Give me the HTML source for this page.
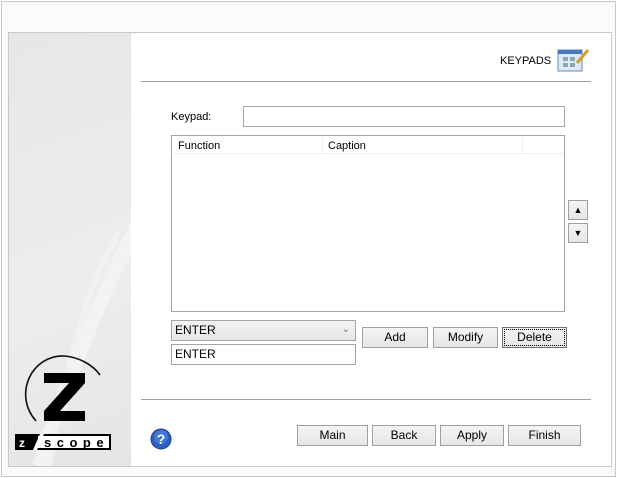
<!DOCTYPE html>
<html><head><style>
body{margin:0;width:618px;height:478px;background:#fff;font-family:"Liberation Sans",sans-serif;font-size:11px;color:#000;position:relative;overflow:hidden}
.a{position:absolute;box-sizing:border-box}
.btn{position:absolute;box-sizing:border-box;border:1px solid #a0a0a0;background:linear-gradient(#f4f4f4,#e6e6e6);text-align:center;line-height:18px;font-size:12px}
.in{position:absolute;box-sizing:border-box;border:1px solid #a5a5a5;background:#fff;font-size:12px;padding-left:3px;line-height:18px}
</style></head><body>
<div class="a" style="left:1px;top:1px;width:615px;height:476px;border:1px solid #c8c8c8;background:#fdfafd"></div>
<div class="a" style="left:8px;top:32px;width:604px;height:435px;border:1px solid #c8c8c8;background:#fff"></div>
<div class="a" style="left:9px;top:33px;width:122px;height:433px;background:linear-gradient(160deg,#e8e6e8,#eeecee 60%,#e6e4e6);overflow:hidden">
<svg width="122" height="433" style="position:absolute;left:0;top:0">
<path d="M 30 433 Q 80 280 140 170" stroke="#f4f2f4" stroke-width="14" fill="none"/>
<path d="M 110 200 Q 70 260 40 433" stroke="#f2f0f2" stroke-width="6" fill="none"/>
<path d="M 27 388 C 4 362, 22 322, 55 323 C 70 324, 84 332, 91 342" stroke="#111" stroke-width="1.6" fill="none"/>
<polygon points="35,340 76,340 76,350 51,378 76,378 76,388 35,388 35,378 60,350 35,350" fill="#000"/>
<rect x="6" y="401" width="96" height="16" fill="#000"/>
<rect x="29" y="403" width="71" height="12" fill="#fff"/>
<polygon points="24,417 31,401 35,401 28,417" fill="#fff"/>
<text x="10" y="414" font-family="Liberation Sans" font-weight="bold" font-size="12" fill="#fff">z</text>
<text x="35" y="414" font-family="Liberation Sans" font-weight="bold" font-size="13" fill="#000" letter-spacing="5.5">scope</text>
</svg></div>
<div class="a" style="left:141px;top:81px;width:450px;height:1px;background:#a0a0a0"></div>
<div class="a" style="left:141px;top:399px;width:450px;height:1px;background:#a0a0a0"></div>
<div class="a" style="left:500px;top:55px;font-size:11px">KEYPADS</div>
<svg class="a" style="left:557px;top:47px" width="34" height="26">
<rect x="1" y="3" width="24" height="21" fill="#dfe8f4" stroke="#6a8ab8"/>
<rect x="1" y="3" width="24" height="4" fill="#4a78c0"/>
<rect x="6" y="10" width="5" height="4" fill="#8aa"/><rect x="13" y="10" width="5" height="4" fill="#8aa"/>
<rect x="6" y="16" width="5" height="4" fill="#8aa"/><rect x="13" y="16" width="5" height="4" fill="#8aa"/>
<path d="M20 16 L31 3" stroke="#d0a020" stroke-width="3"/>
</svg>
<div class="a" style="left:171px;top:111px;font-size:11px">Keypad:</div>
<div class="in" style="left:243px;top:106px;width:322px;height:21px"></div>
<div class="a" style="left:171px;top:135px;width:394px;height:177px;border:1px solid #a5a5a5;background:#fff">
<div class="a" style="left:1px;top:0;width:350px;height:18px;border-bottom:1px solid #eef0f8"></div>
<div class="a" style="left:6px;top:4px">Function</div>
<div class="a" style="left:150px;top:1px;width:1px;height:16px;background:#eef0f8"></div>
<div class="a" style="left:156px;top:4px">Caption</div>
<div class="a" style="left:350px;top:1px;width:1px;height:16px;background:#eef0f8"></div>
<div class="a" style="left:350px;top:17px;width:42px;height:1px;background:#eef0f8"></div>
</div>
<div class="btn" style="left:568px;top:200px;width:20px;height:20px;font-size:9px;line-height:18px">▲</div>
<div class="btn" style="left:568px;top:223px;width:20px;height:20px;font-size:9px;line-height:18px">▼</div>
<div class="in" style="left:171px;top:320px;width:185px;height:21px;background:linear-gradient(#f4f4f4,#e6e6e6)">ENTER<span style="position:absolute;right:5px;color:#777;font-size:10px">⌄</span></div>
<div class="in" style="left:171px;top:344px;width:185px;height:21px">ENTER</div>
<div class="btn" style="left:362px;top:327px;width:66px;height:21px">Add</div>
<div class="btn" style="left:433px;top:327px;width:65px;height:21px">Modify</div>
<div class="btn" style="left:502px;top:327px;width:65px;height:21px;border-color:#707070;outline:1px dotted #000;outline-offset:-3px">Delete</div>
<svg class="a" style="left:150px;top:428px" width="22" height="22"><circle cx="11" cy="11" r="10" fill="#2a5fc0" stroke="#1a3f90"/><circle cx="11" cy="9" r="7" fill="#5a8fe8" opacity=".5"/><text x="11" y="16" text-anchor="middle" font-family="Liberation Sans" font-weight="bold" font-size="14" fill="#fff">?</text></svg>
<div class="btn" style="left:297px;top:425px;width:71px;height:21px">Main</div>
<div class="btn" style="left:372px;top:425px;width:64px;height:21px">Back</div>
<div class="btn" style="left:440px;top:425px;width:64px;height:21px">Apply</div>
<div class="btn" style="left:508px;top:425px;width:73px;height:21px">Finish</div>
</body></html>
